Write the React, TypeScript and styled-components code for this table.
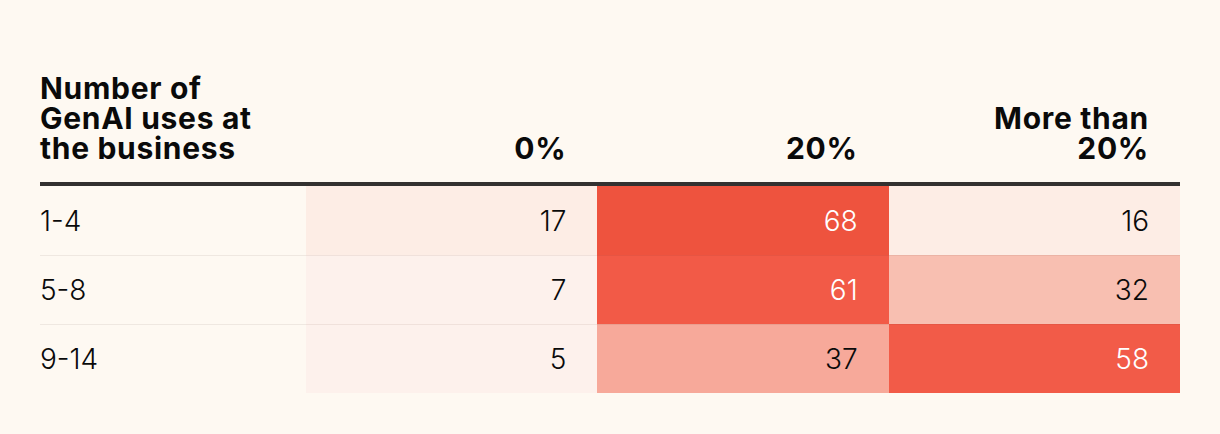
import { FunctionComponent } from "react";
import styled, { createGlobalStyle } from "styled-components";

type Row = {
  label: string;
  values: number[];
};

const rows: Row[] = [
  { label: "1-4", values: [17, 68, 16] },
  { label: "5-8", values: [7, 61, 32] },
  { label: "9-14", values: [5, 37, 58] },
];

const cellColors: Record<number, string> = {
  17: "#fdede5",
  7: "#fdf1ec",
  5: "#fdf1ec",
  68: "#ee533e",
  61: "#f25a47",
  37: "#f7a99a",
  16: "#fdede5",
  32: "#f8bfb1",
  58: "#f25b48",
};

const GlobalStyle = createGlobalStyle`
  html, body {
    margin: 0;
    padding: 0;
    background: #fef9f2;
  }
  body {
    font-family: Inter, "Liberation Sans", sans-serif;
    color: #111;
  }
`;

const Page = styled.div`
  width: 1220px;
  height: 434px;
  box-sizing: border-box;
  padding: 73px 40px 0 40px;
  background: #fef9f2;
`;

const Table = styled.div`
  display: grid;
  grid-template-columns: 266px repeat(3, 1fr);
`;

const HeadCell = styled.div<{ $align?: "left" | "right" }>`
  display: flex;
  flex-direction: column;
  justify-content: flex-end;
  padding: 0 ${(p) => (p.$align === "right" ? "31px" : "0")} 19px 0;
  font-size: 30px;
  line-height: 30px;
  font-weight: 700;
  letter-spacing: 0.7px;
  text-align: ${(p) => p.$align ?? "left"};
  color: #0a0a0a;
  border-bottom: 4px solid #333130;
`;

const LabelCell = styled.div<{ $first?: boolean }>`
  height: 69px;
  box-sizing: border-box;
  display: flex;
  align-items: center;
  font-size: 28px;
  font-weight: 300;
  color: #0a0a0a;
  border-top: ${(p) => (p.$first ? "none" : "1px solid rgba(60, 40, 20, 0.08)")};
`;

const ValueCell = styled.div<{ $bg: string; $light: boolean; $first?: boolean }>`
  height: 69px;
  box-sizing: border-box;
  display: flex;
  align-items: center;
  justify-content: flex-end;
  padding-right: 31px;
  font-size: 28px;
  font-weight: 300;
  background: ${(p) => p.$bg};
  color: ${(p) => (p.$light ? "#ffffff" : "#0a0a0a")};
  border-top: ${(p) => (p.$first ? "none" : "1px solid rgba(90, 40, 20, 0.08)")};
`;

const App: FunctionComponent = () => {
  return (
    <>
      <GlobalStyle />
      <Page>
        <Table>
          <HeadCell>
            Number of
            <br />
            GenAI uses at
            <br />
            the business
          </HeadCell>
          <HeadCell $align="right">0%</HeadCell>
          <HeadCell $align="right">20%</HeadCell>
          <HeadCell $align="right">
            More than
            <br />
            20%
          </HeadCell>
          {rows.map((row, i) => [
            <LabelCell key={row.label} $first={i === 0}>
              {row.label}
            </LabelCell>,
            ...row.values.map((v, j) => (
              <ValueCell
                key={`${row.label}-${j}`}
                $bg={cellColors[v]}
                $light={v >= 50}
                $first={i === 0}
              >
                {v}
              </ValueCell>
            )),
          ])}
        </Table>
      </Page>
    </>
  );
};

export default App;
